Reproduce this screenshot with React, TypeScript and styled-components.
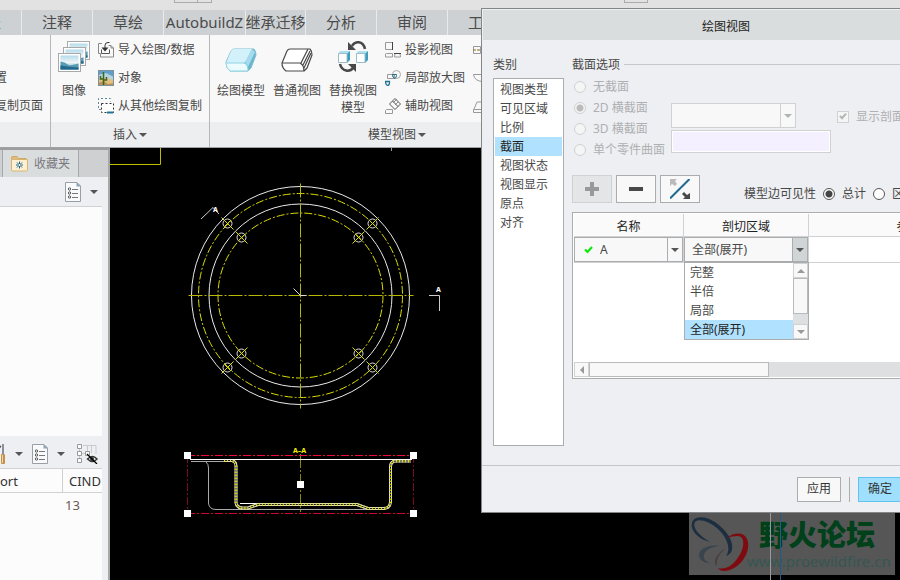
import React from "react";
import styled, { createGlobalStyle, css } from "styled-components";

const GlobalStyle = createGlobalStyle`
  *, *::before, *::after { box-sizing: border-box; }
  body { margin: 0; overflow: hidden; }
  body, button, input, select, table {
    font-family: "Noto Sans", "Noto Sans CJK SC", sans-serif;
    font-size: 12px;
    line-height: 18px;
    color: #484848;
  }
  ul { list-style: none; margin: 0; padding: 0; }
  svg { display: block; flex: none; }
`;

/* ---------- shell ---------- */

const Shell = styled.div`
  position: relative;
  display: flex;
  flex-direction: column;
  height: 100vh;
  overflow: hidden;
  background: #eeeff2;
`;

const TitleStrip = styled.header`
  display: flex;
  gap: 412px;
  height: 10px;
  flex: none;
  padding-left: 174px;
  background: #e2e2e2;
`;

const StripBox = styled.span<{ $split?: boolean }>`
  display: flex;
  width: ${(p) => (p.$split ? 38 : 24)}px;
  height: 3px;
  border: 1px solid #a9abad;
  border-top: 0;
  ${(p) => p.$split && css`
    &::before { content: ""; width: 23px; border-right: 1px solid #a9abad; }
  `}
`;

const TabBar = styled.nav`
  display: flex;
  height: 25px;
  flex: none;
  overflow: hidden;
  background: #cdd1d3;
`;

const Tab = styled.button<{ $width: number; $edge?: boolean }>`
  display: flex;
  flex: none;
  align-items: center;
  justify-content: ${(p) => (p.$edge ? "flex-end" : "center")};
  width: ${(p) => p.$width}px;
  padding: 0 ${(p) => (p.$edge ? 20 : 0)}px 2px 0;
  border: 0;
  border-right: 1px solid #e8eaeb;
  background: transparent;
  color: ${(p) => (p.$edge ? "#2f7fb8" : "#4b4b4b")};
  font-size: 15px;
  white-space: nowrap;
`;

/* ---------- ribbon ---------- */

const Ribbon = styled.section`
  display: flex;
  flex: none;
  height: 113px;
  background: #f8f8f8;
  border-bottom: 1px solid #9fa1a3;
  overflow: hidden;
`;

const Group = styled.div<{ $width: number }>`
  display: flex;
  flex-direction: column;
  flex: none;
  width: ${(p) => p.$width}px;
  border-right: 1px solid #b4b6b8;
`;

const GroupBody = styled.div<{ $end?: boolean }>`
  display: flex;
  flex: 1;
  justify-content: ${(p) => (p.$end ? "flex-end" : "flex-start")};
  padding: 1px ${(p) => (p.$end ? 7 : 0)}px 0 ${(p) => (p.$end ? 0 : 3)}px;
  overflow: hidden;
`;

const GroupFooter = styled.button`
  display: flex;
  align-items: center;
  justify-content: center;
  gap: 2px;
  height: 25px;
  padding: 0;
  border: 0;
  background: #edeef0;
`;

const BigButton = styled.button<{ $width: number }>`
  display: flex;
  flex-direction: column;
  align-items: center;
  flex: none;
  width: ${(p) => p.$width}px;
  padding: 5px 0 0;
  border: 0;
  background: transparent;
  line-height: 17px;
`;

const BigIcon = styled.span`
  display: block;
  height: 41px;
`;

const SmallColumn = styled.div<{ $gap?: number }>`
  display: flex;
  flex-direction: column;
  flex: none;
  padding-left: ${(p) => p.$gap || 0}px;
`;

const SmallButton = styled.button`
  display: flex;
  align-items: center;
  gap: 4px;
  height: 28px;
  padding: 0;
  border: 0;
  background: transparent;
  white-space: nowrap;
`;

/* ---------- left panel ---------- */

const Body = styled.main`
  display: flex;
  flex: 1;
  min-height: 0;
`;

const SidePanel = styled.aside`
  display: flex;
  flex-direction: column;
  flex: none;
  width: 110px;
  border-top: 2px solid #9b9d9f;
  border-right: 2px solid #a5a7a9;
  background: #eeeff2;
`;

const SideTabs = styled.div`
  display: flex;
  height: 27px;
  flex: none;
  padding-left: 2px;
  background: #cfd0d2;
`;

const SideTab = styled.button`
  display: flex;
  align-items: center;
  gap: 6px;
  width: 77px;
  padding: 0 8px;
  border: 1px solid #a6a9ab;
  border-width: 0 1px;
  background: #d9dddd;
  color: #7a7880;
`;

const PanelBar = styled.div<{ $height: number; $tight?: boolean }>`
  display: flex;
  align-items: center;
  justify-content: flex-end;
  flex: none;
  height: ${(p) => p.$height}px;
  margin-right: 6px;
  padding: ${(p) => (p.$tight ? 3 : 0)}px 4px 0 0;
  gap: 9px;
  border-bottom: 1px solid #cfd1d3;
  overflow: hidden;
`;

const ButtonPair = styled.div<{ $after?: boolean }>`
  display: flex;
  align-items: center;
  gap: 9px;
  margin-right: ${(p) => (p.$after ? 3 : 0)}px;
`;

const IconButton = styled.button`
  display: flex;
  flex: none;
  padding: 0;
  border: 0;
  background: transparent;
`;

const PanelList = styled.div<{ $height?: number }>`
  flex: ${(p) => (p.$height ? `0 0 ${p.$height}px` : "1")};
  margin-right: 6px;
  background: #fcfcfd;
  overflow: hidden;
`;

const ModelTable = styled.table`
  width: 100%;
  border-collapse: separate;
  border-spacing: 0;
  table-layout: fixed;
  th {
    height: 24px;
    padding: 1px 0 0 6px;
    border-bottom: 1px solid #cfd1d3;
    font-size: 13px;
    font-weight: 400;
    text-align: left;
    color: #333;
  }
  th:first-child { width: 63px; padding: 1px 0 0; border-right: 1px solid #cfd1d3; }
  td { height: 23px; padding: 0 0 0 2px; font-size: 13px; color: #6b5a55; }
`;

/* ---------- canvas ---------- */

const Viewport = styled.section`
  position: relative;
  flex: 1;
  min-width: 0;
  background: #000;
  overflow: hidden;
`;

const Watermark = styled.div`
  position: absolute;
  left: 579px;
  top: 365px;
  display: flex;
  width: 206px;
  height: 62px;
  background: #565656;
`;

const WatermarkText = styled.div`
  display: flex;
  flex-direction: column;
  padding-top: 3px;
`;

const Brand = styled.strong`
  padding-left: 12px;
  font: 900 29px/34px "Noto Sans CJK SC", sans-serif;
  color: #00401a;
  white-space: nowrap;
`;

const Site = styled.a`
  font-size: 15px;
  line-height: 22px;
  color: #355652;
  text-decoration: none;
`;

const GuideLines = styled.svg`
  position: absolute;
  left: 660px;
  top: 365px;
`;

/* ---------- dialog ---------- */

const Dialog = styled.section`
  position: absolute;
  left: 481px;
  top: 8px;
  display: flex;
  flex-direction: column;
  width: 490px;
  border: 1px solid #848688;
  background: #eeeff2;
`;

const DialogTitle = styled.h1`
  margin: 1px 1px 0;
  height: 30px;
  background: #d9dddd;
  font-size: 12px;
  font-weight: 400;
  line-height: 33px;
  text-align: center;
  color: #222;
`;

const DialogBody = styled.div`
  display: flex;
  gap: 8px;
  padding: 16px 10px 19px 11px;
`;

const Categories = styled.div`
  display: flex;
  flex-direction: column;
  flex: none;
  width: 71px;
`;

const Heading = styled.h2`
  display: flex;
  align-items: center;
  gap: 4px;
  height: 18px;
  margin: 0 0 4px;
  font-size: 12px;
  font-weight: 400;
  line-height: 18px;
  white-space: nowrap;
`;

const Rule = styled.span`
  flex: 1;
  height: 1px;
  margin-bottom: 2px;
  background: #c6c8ca;
`;

const CategoryList = styled.ul`
  height: 368px;
  padding: 1px;
  border: 1px solid #aaacae;
  background: #fff;
`;

const Option = styled.li<{ $selected?: boolean }>`
  height: 19px;
  padding-left: 5px;
  line-height: 19px;
  white-space: nowrap;
  background: ${(p) => (p.$selected ? "#b0e2ff" : "transparent")};
  color: ${(p) => (p.$selected ? "#222" : "#484848")};
`;

const Settings = styled.div`
  flex: 1;
  min-width: 0;
`;

const SectionGrid = styled.div`
  display: grid;
  grid-template-columns: 99px 160px 1fr;
  align-items: start;
  height: 97px;
`;

const RadioColumn = styled.div`
  display: flex;
  flex-direction: column;
  margin-top: -2px;
  padding-left: 2px;
`;

const Choice = styled.label<{ $muted?: boolean }>`
  display: flex;
  align-items: center;
  gap: 7px;
  height: 21px;
  white-space: nowrap;
  color: ${(p) => (p.$muted ? "#aeb0b2" : "#484848")};
`;

const Radio = styled.input.attrs({ type: "radio" })`
  appearance: none;
  flex: none;
  width: 12px;
  height: 12px;
  margin: 0;
  border: 1px solid #555;
  border-radius: 50%;
  background: #fff;
  &:checked { background: radial-gradient(circle, #444 0 3px, #fff 4px); }
  &:disabled { border-color: #cfd1d3; background: #f5f5f6; }
  &:disabled:checked { background: radial-gradient(circle, #bbb 0 3px, #f5f5f6 4px); }
`;

const Fields = styled.div`
  display: flex;
  flex-direction: column;
  gap: 2px;
  padding-top: 25px;
`;

const SelectFrame = styled.div<{ $width?: number; $strong?: boolean; $active?: boolean }>`
  display: flex;
  width: ${(p) => (p.$width ? `${p.$width}px` : "100%")};
  height: 25px;
  border: 1px solid ${(p) => (p.$strong ? "#aaacae" : "#cfd1d3")};
  background: #f8f8f8;
  & > span {
    display: flex;
    align-items: center;
    justify-content: center;
    width: 15px;
    border-left: 1px solid ${(p) => (p.$strong ? "#aaacae" : "#cfd1d3")};
    background: ${(p) => (p.$active ? "#d0d5d5" : "transparent")};
  }
`;

const Select = styled.select`
  appearance: none;
  flex: 1;
  min-width: 0;
  padding: 0 7px;
  border: 0;
  background: transparent;
  outline: 0;
`;

const Collector = styled.input`
  width: 160px;
  height: 23px;
  padding: 0 4px;
  border: 1px solid #cfd1d3;
  background: #f4f0ff;
  box-shadow: inset 0 0 0 1px #fff;
`;

const CheckWrap = styled.label`
  display: flex;
  align-items: center;
  gap: 7px;
  padding: 30px 0 0 6px;
  white-space: nowrap;
  color: #aeb0b2;
`;

const CheckInput = styled.input.attrs({ type: "checkbox" })`
  appearance: none;
  flex: none;
  width: 12px;
  height: 12px;
  margin: 0;
  border: 1px solid #cfd1d3;
  background: #f5f5f6;
  &:checked::after {
    content: "";
    display: block;
    width: 4px;
    height: 7px;
    margin: 0 auto;
    border: solid #b4b6b8;
    border-width: 0 2px 2px 0;
    transform: rotate(42deg);
  }
`;

const ToolRow = styled.div`
  display: flex;
  align-items: flex-start;
  gap: 4px;
  height: 37px;
`;

const ToolButton = styled.button`
  display: flex;
  align-items: center;
  justify-content: center;
  flex: none;
  width: 40px;
  height: 28px;
  padding: 0;
  border: 1px solid #aaacae;
  background: #f8f8f8;
  &:disabled { border-color: #cfd1d3; background: #e4e5e7; }
`;

const Visibility = styled.fieldset`
  display: flex;
  align-items: center;
  gap: 7px;
  margin: 8px 0 0 40px;
  padding: 0;
  border: 0;
`;

const VisibilityLabel = styled.span`
  white-space: nowrap;
`;

const GridBox = styled.div`
  position: relative;
  display: flex;
  flex-direction: column;
  height: 167px;
  padding: 1px;
  border: 1px solid #aaacae;
  background: #fff;
`;

const GridScroll = styled.div`
  flex: 1;
  overflow: hidden;
`;

const SectionTable = styled.table`
  width: 435px;
  border-collapse: separate;
  border-spacing: 0;
  table-layout: fixed;
  th, td { padding: 0; border-bottom: 1px solid #cfd1d3; border-right: 1px solid #cfd1d3; }
  th { height: 23px; padding-top: 3px; background: #fafafa; font-weight: 400; line-height: 18px; color: #222; }
  td { height: 25px; }
  th:nth-child(1) { width: 110px; }
  th:nth-child(2) { width: 125px; }
`;

const NameCell = styled.div`
  display: flex;
  align-items: center;
  flex: 1;
  padding-left: 9px;
`;

const Popup = styled.div`
  position: absolute;
  left: 111px;
  top: 49px;
  display: flex;
  width: 125px;
  border: 1px solid #aaacae;
  background: #fff;
  & > ul { flex: 1; }
`;

const VScroll = styled.div`
  display: flex;
  flex-direction: column;
  width: 15px;
  background: #dedfe0;
`;

const ScrollButton = styled.button`
  display: flex;
  align-items: center;
  justify-content: center;
  flex: none;
  width: 15px;
  height: 15px;
  padding: 0;
  border: 1px solid #cfd1d3;
  background: #f8f8f8;
`;

const VThumb = styled.span`
  height: 36px;
  margin-bottom: auto;
  border: 1px solid #b8babc;
  background: #f8f8f8;
`;

const HScroll = styled.div`
  display: flex;
  height: 15px;
  background: #dedfe0;
`;

const HThumb = styled.span`
  width: 180px;
  border: 1px solid #b8babc;
  background: #f8f8f8;
`;

const DialogFooter = styled.footer`
  display: flex;
  align-items: center;
  justify-content: flex-end;
  gap: 8px;
  height: 47px;
  padding-right: 16px;
  border-top: 1px solid #c3c5c7;
`;

const DialogButton = styled.button<{ $primary?: boolean }>`
  width: 44px;
  height: 25px;
  padding: 0;
  border: 1px solid ${(p) => (p.$primary ? "#63c3f0" : "#aaacae")};
  background: ${(p) => (p.$primary ? "#a0e0ff" : "#f8f8f8")};
  color: #333;
`;

const Divider = styled.span`
  width: 1px;
  height: 25px;
  background: #aaacae;
`;

/* ---------- icons ---------- */

const Arrow = ({ dir = "down", color = "#555" }: { dir?: "down" | "up" | "left"; color?: string }) => {
  const d = { down: "M0 1h8l-4 4z", up: "M0 5h8l-4-4z", left: "M6 -1v8l-4-4z" }[dir];
  return (
    <svg width="8" height="6" viewBox="0 0 8 6" overflow="visible"><path d={d} fill={color} /></svg>
  );
};

const PicturesIcon = () => (
  <svg width="32" height="32" viewBox="0 0 32 32">
    <defs>
      <linearGradient id="sky" x1="0" y1="0" x2="0" y2="1">
        <stop offset="0" stopColor="#b5dcec" /><stop offset=".5" stopColor="#eef5f6" /><stop offset="1" stopColor="#5aa2c2" />
      </linearGradient>
    </defs>
    {[[9.5, 0.5], [5.5, 6.5], [0.5, 12.5]].map(([x, y]) => (
      <g key={x} transform={`translate(${x} ${y})`}>
        <rect width="22" height="18" fill="#fff" stroke="#a9a9a9" />
        <rect x="2" y="2" width="18" height="14" fill="url(#sky)" />
        <path d="M2 8l4 1 5 3 5-1 4-1v6H2z" fill="#5b9ab5" />
        <path d="M2 12l7 1 11 1v2H2z" fill="#24688b" />
      </g>
    ))}
  </svg>
);

const ImportIcon = () => (
  <svg width="16" height="16" viewBox="0 0 16 16" fill="none">
    <path d="M4 1.500H.5v10h2M2.500 11.500v3.500h13V6l-2.500-2.500h-2.500" stroke="#888" />
    <path d="M13 3.500V6h2.500" stroke="#888" />
    <path d="M11.500.5H10q-3 0-3 3V6" stroke="#333" />
    <path d="M3.500 5.500h7L7 9.500z" fill="#333" />
    <path d="M3.500 7.500v4h8v-4" stroke="#555" />
  </svg>
);

const ObjectIcon = () => (
  <svg width="16" height="16" viewBox="0 0 16 16">
    <path d="M0 0h16v16H0z" fill="#5f9fc9" />
    <path d="M0 5l8-2 8 4v4H0z" fill="#b5d3dd" />
    <path d="M0 9l6-1 10 2v6H0z" fill="#e0c07c" />
    <path d="M0 13l6-2 4 3 6-1v3H0z" fill="#b8935a" />
    <path d="M5.500 15V2M2.500 6v3h3M8.500 7v3h-3" stroke="#3f6420" strokeWidth="1.500" fill="none" />
    <path d="M.5.5h15v15H.5z" fill="none" stroke="#7d909b" />
  </svg>
);

const CopyDrawingIcon = () => (
  <svg width="16" height="16" viewBox="0 0 16 16" fill="none">
    <path d="M3 11.500H.5V.5h12v3" stroke="#5f8796" strokeDasharray="2 2" />
    <rect x="3.500" y="5.500" width="12" height="9" fill="#fff" stroke="#333" strokeDasharray="2 2" />
    <path d="M9 13.500h6v2H9z" fill="#1f7399" />
  </svg>
);

const SolidIcon = () => (
  <svg width="32" height="32" viewBox="0 0 32 32" strokeLinejoin="round">
    <path d="M1 21L6 10q1-2 3-2h20q2 2 2 6l-5 13-3 3H5q-4-3-4-9z" fill="#6ab6d1" stroke="#83bed1" />
    <path d="M8 8h19l-6 12q-1 2-3 2H1l5-12z" fill="#d2f1fa" />
    <path d="M1 22h18q4 1 4 8H5q-4-3-4-8z" fill="#ecfbfe" stroke="#8ed3e4" />
    <path d="M27 8l3 3-7 15q-1-4-3-4 1-1 1-2z" fill="#a5dced" />
  </svg>
);

const WireIcon = () => (
  <svg width="32" height="32" viewBox="0 0 32 32" fill="#fff" stroke="#484848" strokeWidth="1.200" strokeLinejoin="round">
    <path d="M1 22L6 10q1-2 3-2h20q2 2 2 6l-5 13-3 3H5q-4-3-4-8z" />
    <path d="M1 22h18q4 2 4 8M20 22l7-14M22 24l7-14M23 27l7-15" fill="none" />
  </svg>
);

const SwapIcon = () => (
  <svg width="32" height="32" viewBox="0 0 32 32">
    {[1, 19].map((x) => (
      <g key={x} transform={`translate(${x} 10)`}>
        <path d="M2 0h10l-2 3H0z" fill="#aee0ef" /><path d="M9 3l3-3v9l-3 3z" fill="#3c9dbd" />
        <path d="M.5 2.500h8.500v9H.5z" fill="#fff" stroke="#9ebcc8" />
      </g>
    ))}
    <path d="M28 8C26-1 18 0 15 5" fill="none" stroke="#484848" strokeWidth="2.500" />
    <path d="M11 1v8h8z" fill="#484848" />
    <path d="M3 23c2 8 10 8 13 4" fill="none" stroke="#484848" strokeWidth="2.500" />
    <path d="M19 31V23h-8z" fill="#484848" />
  </svg>
);

const ProjectionIcon = () => (
  <svg width="16" height="16" viewBox="0 0 16 16" fill="none">
    <path d="M.5.5h7v7h-7z" stroke="#999" /><path d="M7.500 0v8" stroke="#444" />
    <path d="M.5 15v-3l1-.5h6v3.500zM10 11.500h5l.5 3.500h-6z" stroke="#999" /><path d="M9 11.500h7" stroke="#444" />
  </svg>
);

const DetailIcon = () => (
  <svg width="16" height="16" viewBox="0 0 16 16" fill="none">
    <circle cx="11.500" cy="4.500" r="4" stroke="#aaa" />
    <path d="M2.500 4.500h7v4h-7z" stroke="#999" /><path d="M7.500 4.500h4v1q0 3-2 3-2-1-2-4z" stroke="#1f7391" />
    <path d="M.5 11.500h4v1q0 3-2 3-2-1-2-4z" stroke="#1f7391" strokeWidth="1.300" />
  </svg>
);

const AuxIcon = () => (
  <svg width="16" height="16" viewBox="0 0 16 16" fill="none">
    <path d="M10 .5L15.500 6 10 11.500 4.500 6zM7.500 3l5.500 5.500" stroke="#555" />
    <path d="M8 5l4-4M10 7l3-3" stroke="#888" />
    <path d="M.5 15.500v-3l1-1h6v4z" stroke="#999" />
  </svg>
);

const EdgeIcon = ({ kind }: { kind: number }) => (
  <svg width="16" height="16" viewBox="0 0 16 16" fill="none" stroke="#999">
    {kind === 0 && <><path d="M.5 4.500h7v7h-7z" /><path d="M0 8h14" stroke="#8a6a20" strokeDasharray="3 1" /><path d="M8.500 5v6" stroke="#444" /></>}
    {kind === 1 && <path d="M.5 4.500h10v7q-9 0-10-7z" />}
    {kind === 2 && <path d="M.5 11.500h12v3H.5zM1 11l3-7h8" />}
  </svg>
);

const FolderIcon = () => (
  <svg width="17" height="16" viewBox="0 0 17 16">
    <path d="M.5 2q0-1.500 1.500-1.500h4l1.500 2H15V5H.5z" fill="#e0bd80" stroke="#cfa75d" />
    <path d="M.5 3.500h16V14q0 1-1 1h-14q-1 0-1-1z" fill="#fdf0d2" stroke="#d7b573" />
    <path d="M8.500 5.500v7M5 9h7M6 6.500l5 5M11 6.500l-5 5" stroke="#186486" />
    <circle cx="8.500" cy="9" r="1" fill="#fff" />
  </svg>
);

const ListIcon = () => (
  <svg width="16" height="20" viewBox="0 0 16 20">
    <path d="M.5.5H12L15.500 4v15.500H.5z" fill="#f8fafb" stroke="#999fa5" /><path d="M11.500 0v4.500H16z" fill="#8ea4b4" />
    {[7, 11, 15].map((y) => <g key={y}><circle cx="4.500" cy={y} r="1.200" fill="none" stroke="#555" /><path d={`M7 ${y}.5h6`} stroke="#777" /></g>)}
  </svg>
);

const ToolIcon = () => (
  <svg width="7" height="20" viewBox="0 0 7 20">
    <path d="M0 2l2 1" stroke="#555" strokeWidth="2" /><path d="M4 0v11" stroke="#8b8f99" strokeWidth="2" />
    <rect x="2" y="10" width="4" height="10" rx="1" fill="#c2914a" /><path d="M3.500 11v8" stroke="#f1d59a" />
  </svg>
);

const TreeIcon = () => (
  <svg width="21" height="20" viewBox="0 0 21 20" fill="none">
    <path d="M2.500 3v14M5 9.500h4M6 1.500h13V10M10.500 2v5M14.500 2v7" stroke="#c8cacc" />
    <path d="M.5.5h4v4h-4zM.5 7.500h4v4h-4zM.5 14.500h4v4h-4zM8.500 7.500h4v4h-4z" stroke="#999" fill="#fff" />
    <path d="M10.500 15q5-5 9.500 0-4.500 5-9.500 0z" fill="#eee" stroke="#333" strokeWidth="1.400" /><circle cx="15" cy="15" r="2" fill="#333" />
    <path d="M10 10l10 10" stroke="#000" strokeWidth="1.300" />
  </svg>
);

const FlipIcon = () => (
  <svg width="20" height="20" viewBox="0 0 20 20">
    <path d="M0 19.500L19.500 0" stroke="#1f6c91" strokeWidth="2" />
    <path d="M0 0h7L5 2l2 3-2 2-3-2-2 2z" fill="#bbb" /><path d="M20 20h-7l2-2-3-3 2-2 3 3 3-2z" fill="#484848" />
  </svg>
);

const PlusIcon = () => <svg width="14" height="14" viewBox="0 0 14 14"><path d="M0 7h14M7 0v14" stroke="#999" strokeWidth="4" /></svg>;
const MinusIcon = () => <svg width="14" height="14" viewBox="0 0 14 14"><path d="M0 7h14" stroke="#484848" strokeWidth="4" /></svg>;
const TickIcon = () => <svg width="9" height="8" viewBox="0 0 9 8"><path d="M1 3.500l2.500 2.500L8 1" fill="none" stroke="#0ce80c" strokeWidth="2.200" /></svg>;

const LogoIcon = () => (
  <svg width="58" height="62" viewBox="0 0 58 62" overflow="visible">
    <path fill="#1c2f40" fillRule="evenodd" d="M3 10C4 3 16 2 26 9c12 8 19 20 17 28-1 3-3 5-6 6 5-6 2-18-8-27C20 8 9 5 6 9c-3 5 4 14 15 20C9 26 1 17 3 10z" />
    <path fill="#7d0b10" d="M38 25c7-6 17-6 20 1 4 9-2 23-13 29-7 4-14 4-16 0 7 2 14-2 19-9 7-9 8-19 4-22-3-2-8-1-14 1z" />
    <path fill="#39454d" d="M30 33c-10-2-20 3-20 9 0 5 5 8 12 8-5-1-8-4-7-8 1-5 7-8 15-9z" />
    <path fill="#4a4044" d="M37 35c-7 4-12 10-11 15q0 2 2 3c-1-7 3-13 9-18z" />
  </svg>
);

/* ---------- drawing ---------- */

const BOLTS = [[-73, -72], [-59, -58], [72, -72], [58, -58], [-59, 58], [58, 58], [-73, 72], [72, 72]];
const WALL = "M224 460.500H232Q236 461.500 236 466V503Q237 508 243 508H248L258 504.500H357L368 508.500H384Q390 508 390.500 502V467Q390.500 461 396 461H411";
const HANDLES = [[187, 455], [413, 455], [187, 513], [413, 513], [300, 484]];

const Drawing = () => (
  <svg width="790" height="432" viewBox="110 148 790 432" fill="none" role="img" aria-label="法兰截面图">
    <path d="M110 164.500H160.500V148" stroke="#bdbd00" />
    <path d="M391.500 148v3" stroke="#999" />
    <g transform="translate(300.5 295.500)">
      <circle r="109" stroke="#eaeaea" />
      <circle r="91.500" stroke="#eaeaea" />
      <g stroke="#dcdc00" strokeDasharray="8 2 2 2">
        <circle r="102" />
        <circle r="82.500" />
      </g>
      <g stroke="#b8b800" strokeDasharray="14 2 2 2"><path d="M-112 0H113M0-112V113" /></g>
      {BOLTS.map(([x, y]) => (
        <g key={`${x},${y}`} transform={`translate(${x} ${y})`}>
          <circle r="4.500" stroke="#ddd" />
          <path d={x * y > 0 ? "M-6-6L6 6M-3 3L3-3" : "M-6 6L6-6M-3-3L3 3"} stroke="#dede00" />
        </g>
      ))}
      <path d="M-7-7L0 0h6" stroke="#ddd" />
    </g>
    <path d="M201 219L213 207.500L219 214M429 295.500H439.500V311" stroke="#ccc" />
    <g fill="#fff" fontFamily="Noto Sans" fontSize="7" fontWeight="700">
      <text x="436" y="292">A</text>
      <text x="213" y="212">A</text>
    </g>
    <path d="M300.500 454V514" stroke="#8a8a00" strokeDasharray="14 2 2 2" />
    <path d="M187 455.500H414" stroke="#f00a3c" strokeDasharray="8 2 2 2" />
    <path d="M187.500 455V514M413.500 455V514" stroke="#7d0824" strokeDasharray="8 2 2 2" />
    <path d="M187 513.500H414" stroke="#c90832" strokeDasharray="8 2 2 2" />
    <path d="M191 461.500H232M206 462Q208.500 464 208.500 468V503Q209 509.500 216 509.500H384" stroke="#aaa" />
    <path d="M240 503.500H260M238 508H248" stroke="#fff" />
    <path d={WALL} stroke="#ddd" strokeWidth="3" />
    <path d={WALL} stroke="#151500" strokeWidth="1" />
    <path d={WALL} stroke="#e6e600" strokeWidth="3" strokeDasharray="1 2" />
    <path d="M190 459.500H412" stroke="#fff" />
    <text x="293" y="453" fill="#f2f200" fontFamily="Noto Sans" fontSize="7" fontWeight="700">A–A</text>
    {HANDLES.map(([x, y]) => <rect key={`${x},${y}`} x={x - 3} y={y - 3} width="7" height="7" fill="#fff" />)}
  </svg>
);

/* ---------- page ---------- */

const TABS: [string, number][] = [["注释", 71], ["草绘", 71], ["AutobuildZ", 82], ["继承迁移", 60], ["分析", 71], ["审阅", 71], ["工具", 71]];
const CATEGORIES = ["视图类型", "可见区域", "比例", "截面", "视图状态", "视图显示", "原点", "对齐"];
const SECTIONS = ["无截面", "2D 横截面", "3D 横截面", "单个零件曲面"];
const REGIONS = ["完整", "半倍", "局部", "全部(展开)"];

const ViewDialog = () => (
  <Dialog role="dialog" aria-labelledby="dialog-title">
    <DialogTitle id="dialog-title">绘图视图</DialogTitle>
    <DialogBody>
      <Categories>
        <Heading id="category-title">类别</Heading>
        <CategoryList role="listbox" aria-labelledby="category-title">
          {CATEGORIES.map((c) => <Option key={c} role="option" aria-selected={c === "截面"} $selected={c === "截面"}>{c}</Option>)}
        </CategoryList>
      </Categories>
      <Settings>
        <Heading>截面选项<Rule /></Heading>
        <SectionGrid>
          <RadioColumn>
            {SECTIONS.map((s, i) => (
              <Choice key={s} $muted><Radio name="section" disabled defaultChecked={i === 1} />{s}</Choice>
            ))}
          </RadioColumn>
          <Fields>
            <SelectFrame $width={125}><Select disabled aria-label="3D 横截面" /><span><Arrow color="#b0b2b4" /></span></SelectFrame>
            <Collector disabled aria-label="单个零件曲面" />
          </Fields>
          <CheckWrap><CheckInput disabled defaultChecked />显示剖面线</CheckWrap>
        </SectionGrid>
        <ToolRow>
          <ToolButton disabled aria-label="添加"><PlusIcon /></ToolButton>
          <ToolButton aria-label="移除"><MinusIcon /></ToolButton>
          <ToolButton aria-label="反向"><FlipIcon /></ToolButton>
          <Visibility>
            <VisibilityLabel>模型边可见性</VisibilityLabel>
            <Choice><Radio name="edges" defaultChecked />总计</Choice>
            <Choice><Radio name="edges" />区域</Choice>
          </Visibility>
        </ToolRow>
        <GridBox>
          <GridScroll>
            <SectionTable>
              <thead><tr><th>名称</th><th>剖切区域</th><th>参照</th></tr></thead>
              <tbody>
                <tr>
                  <td>
                    <SelectFrame $strong>
                      <NameCell><TickIcon /><Select aria-label="名称"><option>A</option></Select></NameCell>
                      <span><Arrow /></span>
                    </SelectFrame>
                  </td>
                  <td>
                    <SelectFrame $strong $active>
                      <Select aria-label="剖切区域" defaultValue="全部(展开)">{REGIONS.map((r) => <option key={r}>{r}</option>)}</Select>
                      <span><Arrow /></span>
                    </SelectFrame>
                  </td>
                  <td />
                </tr>
              </tbody>
            </SectionTable>
          </GridScroll>
          <HScroll>
            <ScrollButton aria-label="向左滚动"><Arrow dir="left" color="#999" /></ScrollButton>
            <HThumb />
          </HScroll>
          <Popup>
            <ul role="listbox" aria-label="剖切区域选项">
              {REGIONS.map((r, i) => <Option key={r} role="option" aria-selected={i === 3} $selected={i === 3}>{r}</Option>)}
            </ul>
            <VScroll>
              <ScrollButton aria-label="向上滚动"><Arrow dir="up" color="#999" /></ScrollButton>
              <VThumb />
              <ScrollButton aria-label="向下滚动"><Arrow color="#999" /></ScrollButton>
            </VScroll>
          </Popup>
        </GridBox>
      </Settings>
    </DialogBody>
    <DialogFooter>
      <DialogButton>应用</DialogButton>
      <Divider />
      <DialogButton $primary>确定</DialogButton>
      <DialogButton>取消</DialogButton>
    </DialogFooter>
  </Dialog>
);

export default function App() {
  return (
    <>
      <GlobalStyle />
      <Shell>
        <TitleStrip><StripBox $split /><StripBox /></TitleStrip>
        <TabBar>
          <Tab $width={22} $edge>表</Tab>
          {TABS.map(([t, w]) => <Tab key={t} $width={w}>{t}</Tab>)}
        </TabBar>
        <Ribbon>
          <Group $width={51}>
            <GroupBody $end>
              <SmallColumn>
                <SmallButton aria-label="页面" />
                <SmallButton>置</SmallButton>
                <SmallButton>复制页面</SmallButton>
              </SmallColumn>
            </GroupBody>
            <GroupFooter aria-label="文档" />
          </Group>
          <Group $width={159}>
            <GroupBody>
              <BigButton $width={40}><BigIcon><PicturesIcon /></BigIcon>图像</BigButton>
              <SmallColumn $gap={4}>
                <SmallButton><ImportIcon />导入绘图/数据</SmallButton>
                <SmallButton><ObjectIcon />对象</SmallButton>
                <SmallButton><CopyDrawingIcon />从其他绘图复制</SmallButton>
              </SmallColumn>
            </GroupBody>
            <GroupFooter>插入<Arrow /></GroupFooter>
          </Group>
          <Group $width={375}>
            <GroupBody>
              <BigButton $width={56}><BigIcon><SolidIcon /></BigIcon>绘图模型</BigButton>
              <BigButton $width={56}><BigIcon><WireIcon /></BigIcon>普通视图</BigButton>
              <BigButton $width={56}><BigIcon><SwapIcon /></BigIcon>替换视图<br />模型</BigButton>
              <SmallColumn $gap={4}>
                <SmallButton><ProjectionIcon />投影视图</SmallButton>
                <SmallButton><DetailIcon />局部放大图</SmallButton>
                <SmallButton><AuxIcon />辅助视图</SmallButton>
              </SmallColumn>
              <SmallColumn $gap={8}>
                <SmallButton aria-label="复制并对齐视图"><EdgeIcon kind={0} /></SmallButton>
                <SmallButton aria-label="旋转视图"><EdgeIcon kind={1} /></SmallButton>
                <SmallButton aria-label="叠加视图"><EdgeIcon kind={2} /></SmallButton>
              </SmallColumn>
            </GroupBody>
            <GroupFooter>模型视图<Arrow /></GroupFooter>
          </Group>
        </Ribbon>
        <Body>
          <SidePanel>
            <SideTabs><SideTab><FolderIcon />收藏夹</SideTab></SideTabs>
            <PanelBar $height={30}>
              <IconButton aria-label="列表设置"><ListIcon /></IconButton>
              <IconButton aria-label="更多"><Arrow /></IconButton>
            </PanelBar>
            <PanelList $height={229} />
            <PanelBar $height={33} $tight>
              <ButtonPair>
                <IconButton aria-label="工具"><ToolIcon /></IconButton>
                <IconButton aria-label="工具菜单"><Arrow /></IconButton>
              </ButtonPair>
              <ButtonPair $after>
                <IconButton aria-label="显示"><ListIcon /></IconButton>
                <IconButton aria-label="显示菜单"><Arrow /></IconButton>
              </ButtonPair>
              <IconButton aria-label="模型树"><TreeIcon /></IconButton>
            </PanelBar>
            <PanelList>
              <ModelTable>
                <thead><tr><th>ort</th><th>CIND</th></tr></thead>
                <tbody><tr><td /><td>13</td></tr></tbody>
              </ModelTable>
            </PanelList>
          </SidePanel>
          <Viewport>
            <Drawing />
            <Watermark>
              <LogoIcon />
              <WatermarkText>
                <Brand>野火论坛</Brand>
                <Site href="#">www.proewildfire.cn</Site>
              </WatermarkText>
            </Watermark>
            <GuideLines width="12" height="67" viewBox="0 0 12 67">
              <path d="M.5 0v67" stroke="#999" /><path d="M10.500 0v67" stroke="#205a8a" />
            </GuideLines>
          </Viewport>
        </Body>
        <ViewDialog />
      </Shell>
    </>
  );
}
